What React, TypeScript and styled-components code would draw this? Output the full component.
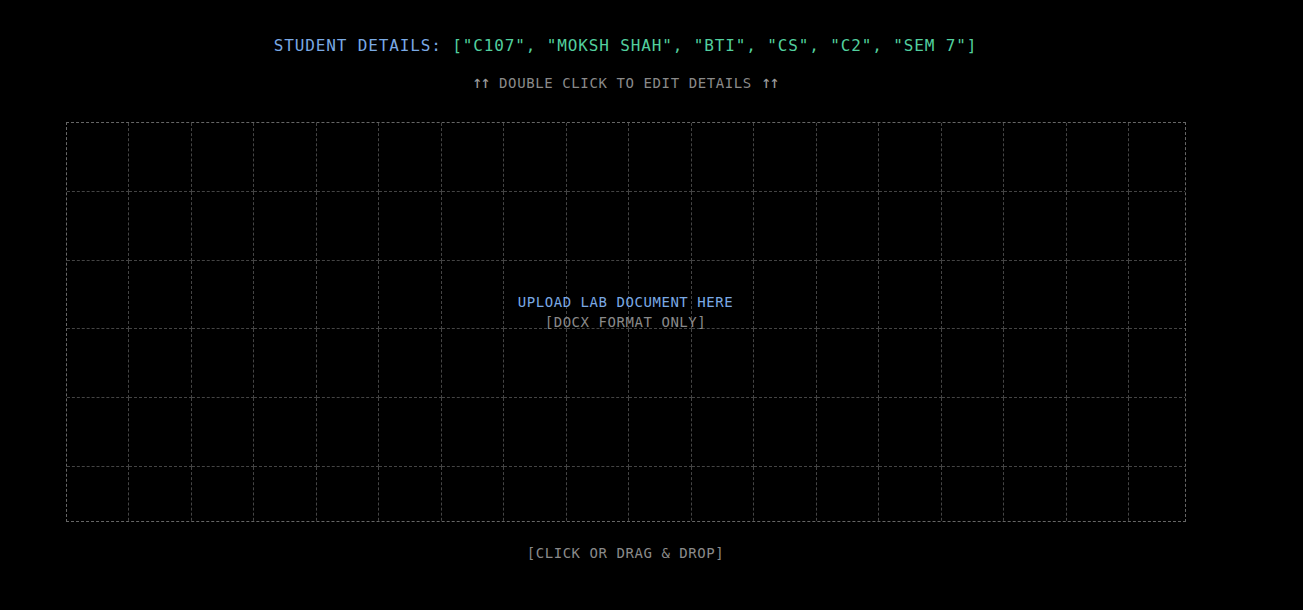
import { FunctionComponent } from "react";
import styled, { createGlobalStyle } from "styled-components";

const details = ["C107", "MOKSH SHAH", "BTI", "CS", "C2", "SEM 7"];
const GRID_COLS = 18;
const GRID_ROWS = 6;

const GlobalStyle = createGlobalStyle`
  html, body {
    margin: 0;
    padding: 0;
    background: #000;
  }
  body {
    font-family: "DejaVu Sans Mono", "Liberation Mono", monospace;
    color: #8a8a8a;
  }
`;

const App: FunctionComponent = () => {
  return (
    <Page>
      <GlobalStyle />
      <Header>
        <Label>STUDENT DETAILS: </Label>
        <Values>[{details.map((d) => `"${d}"`).join(", ")}]</Values>
      </Header>
      <Hint>
        <Arrows>↑↑</Arrows> DOUBLE CLICK TO EDIT DETAILS <Arrows>↑↑</Arrows>
      </Hint>
      <DropZone>
        <GridLayer>
          {Array.from({ length: GRID_COLS * GRID_ROWS }).map((_, i) => (
            <Cell key={i} />
          ))}
        </GridLayer>
        <DropText>
          <UploadTitle>UPLOAD LAB DOCUMENT HERE</UploadTitle>
          <Format>[DOCX FORMAT ONLY]</Format>
        </DropText>
      </DropZone>
      <Footer>[CLICK OR DRAG &amp; DROP]</Footer>
    </Page>
  );
};

const Page = styled.div`
  width: 1251px;
  height: 610px;
  display: flex;
  flex-direction: column;
  align-items: center;
  padding-top: 34px;
  box-sizing: border-box;
`;

const Header = styled.div`
  font-size: 16px;
  line-height: 24px;
  letter-spacing: 0.87px;
  white-space: pre;
`;

const Label = styled.span`
  color: #7aa9e4;
`;

const Values = styled.span`
  color: #52cf9e;
`;

const Hint = styled.div`
  margin-top: 14px;
  font-size: 14px;
  line-height: 20px;
  letter-spacing: 0.6px;
  color: #8a8a8a;
  white-space: pre;
`;

const Arrows = styled.span`
  display: inline-block;
  width: 18px;
  font-size: 17px;
  letter-spacing: -2px;
  color: #9a9a9a;
`;

const DropZone = styled.div`
  position: relative;
  margin-top: 29px;
  width: 1120px;
  height: 400px;
  box-sizing: border-box;
  border: 1px dashed #666;
  display: flex;
  align-items: center;
  justify-content: center;
  padding-bottom: 21px;
  overflow: hidden;
  cursor: pointer;
`;

const GridLayer = styled.div`
  position: absolute;
  top: 0;
  left: 0;
  display: grid;
  grid-template-columns: repeat(${GRID_COLS}, 62.5px);
  grid-template-rows: repeat(${GRID_ROWS}, 68.75px);
`;

const Cell = styled.div`
  border-right: 1px dashed #444;
  border-bottom: 1px dashed #444;
  box-sizing: border-box;
`;

const DropText = styled.div`
  position: relative;
  display: flex;
  flex-direction: column;
  align-items: center;
  font-size: 14px;
  line-height: 20px;
  letter-spacing: 0.55px;
`;

const UploadTitle = styled.span`
  color: #7aa9e4;
`;

const Format = styled.span`
  color: #8a8a8a;
`;

const Footer = styled.div`
  margin-top: 21px;
  font-size: 14px;
  line-height: 20px;
  letter-spacing: 0.55px;
  color: #8a8a8a;
`;

export default App;
